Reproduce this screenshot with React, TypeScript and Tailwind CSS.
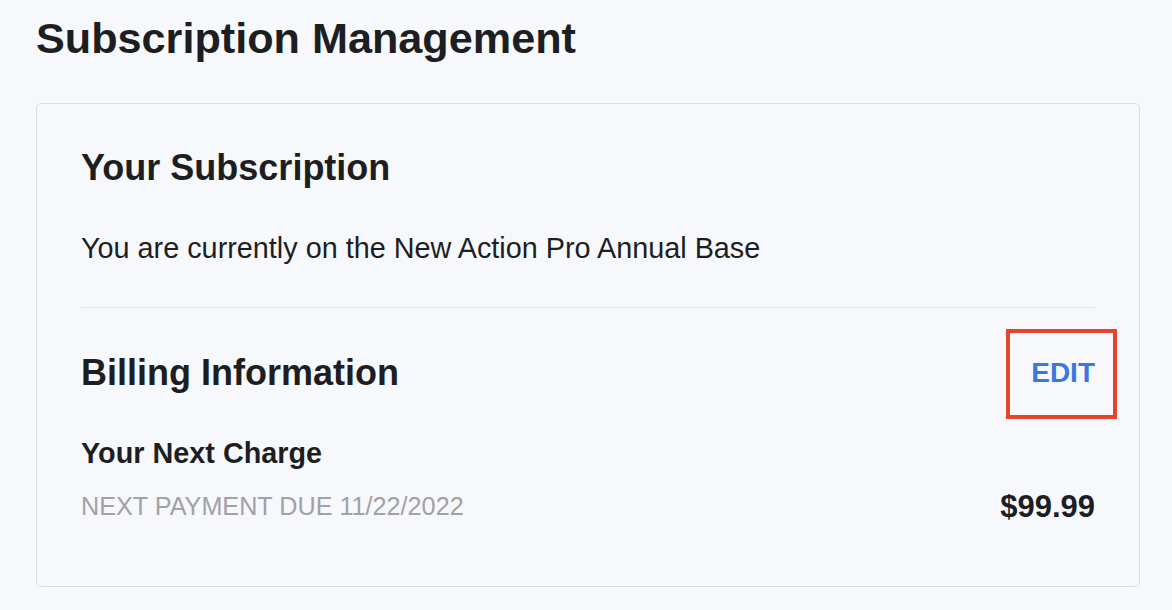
import React from "react";

export default function App() {
  return (
    <div
      className="min-h-[610px] w-full bg-[#f7f8fc] pl-[36px] pr-[32px] pt-[17px] pb-[24px] text-[#1d1e22]"
      style={{ fontFamily: '"Liberation Sans", Arial, sans-serif' }}
    >
      <h1 className="text-[43.2px] font-bold leading-none">Subscription Management</h1>

      <div className="mt-[43px] rounded-[5px] border border-[#dcdde1] px-[44px] pt-[46px] pb-[64px]">
        <h2 className="text-[36px] font-bold leading-none">Your Subscription</h2>
        <p className="mt-[48px] text-[28.8px] leading-none">
          You are currently on the New Action Pro Annual Base
        </p>

        <div className="mt-[44px] h-px bg-[#e3e4e8]" />

        <div className="mt-[47px] flex items-center justify-between">
          <h2 className="text-[36px] font-bold leading-none">Billing Information</h2>
          <span className="relative text-[28px] font-bold leading-none text-[#3a78e0]">
            EDIT
            <span className="absolute -left-[25px] -top-[30px] -right-[22px] -bottom-[32px] border-4 border-[#e8432d]" />
          </span>
        </div>

        <h3 className="mt-[48px] text-[28.8px] font-bold leading-none">Your Next Charge</h3>

        <div className="mt-[23px] flex items-center justify-between">
          <span className="text-[25.2px] leading-none text-[#a1a1a6]">NEXT PAYMENT DUE 11/22/2022</span>
          <span className="text-[31px] font-bold leading-none">$99.99</span>
        </div>
      </div>
    </div>
  );
}
